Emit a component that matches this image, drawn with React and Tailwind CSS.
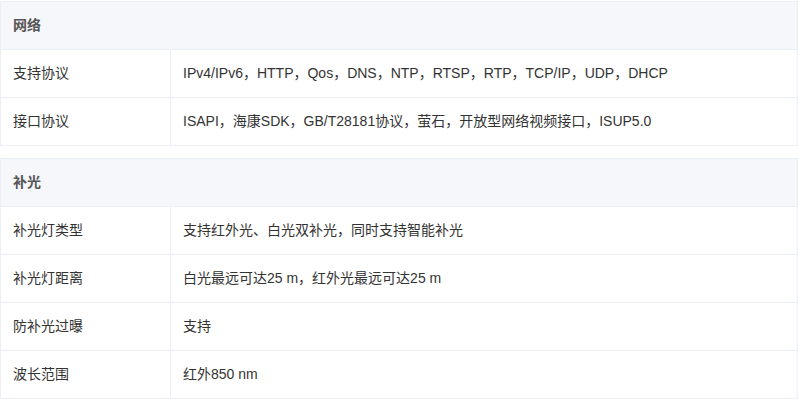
const sections = [
  {
    title: '网络',
    rows: [
      ['支持协议', 'IPv4/IPv6，HTTP，Qos，DNS，NTP，RTSP，RTP，TCP/IP，UDP，DHCP'],
      ['接口协议', 'ISAPI，海康SDK，GB/T28181协议，萤石，开放型网络视频接口，ISUP5.0'],
    ],
  },
  {
    title: '补光',
    rows: [
      ['补光灯类型', '支持红外光、白光双补光，同时支持智能补光'],
      ['补光灯距离', '白光最远可达25 m，红外光最远可达25 m'],
      ['防补光过曝', '支持'],
      ['波长范围', '红外850 nm'],
    ],
  },
]

function SpecTable({ title, rows }) {
  return (
    <div className="border-x border-t border-[#ebeef5]">
      <div className="h-12 flex items-center px-3 bg-[#f6f7fb] border-b border-[#ebeef5] text-[14px] font-bold text-[#555]">
        {title}
      </div>
      {rows.map(([label, value]) => (
        <div key={label} className="h-12 flex border-b border-[#ebeef5] text-[14px] text-[#333]">
          <div className="w-[170px] shrink-0 flex items-center px-3 border-r border-[#ebeef5]">{label}</div>
          <div className="flex-1 flex items-center px-3">{value}</div>
        </div>
      ))}
    </div>
  )
}

export default function App() {
  return (
    <div
      className="w-[798px] h-[399px] bg-white pt-px flex flex-col gap-3 overflow-hidden"
      style={{ fontFamily: '"Liberation Sans", "Noto Sans CJK SC", sans-serif' }}
    >
      {sections.map((s) => (
        <SpecTable key={s.title} {...s} />
      ))}
    </div>
  )
}
